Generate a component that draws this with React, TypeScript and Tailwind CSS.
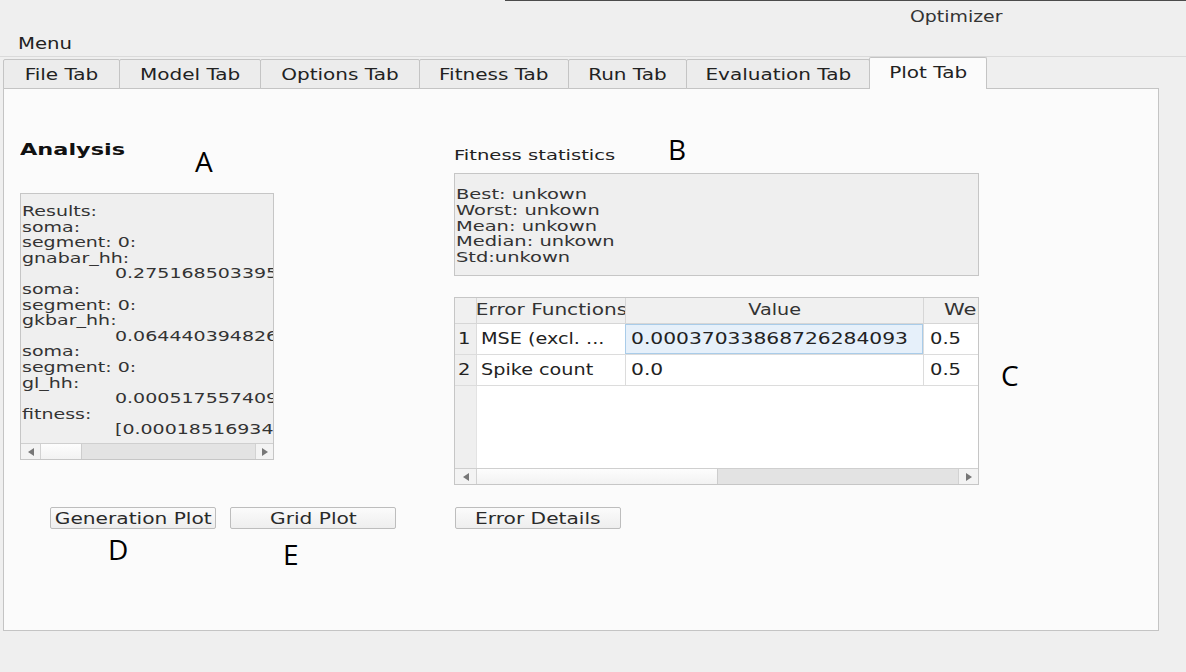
import React from "react";

const font = "font-['DejaVu_Sans','Liberation_Sans',sans-serif]";
const note = "font-['Open_Sans','Liberation_Sans',sans-serif] text-[28px] leading-none text-black";

// the screenshot is stretched sideways, so text spans get a horizontal scale
function W({ children, className = "" }: { children: React.ReactNode; className?: string }) {
  return <span className={`inline-block whitespace-nowrap ${className}`}>{children}</span>;
}

const tabs = [
  { label: "File Tab", w: "w-[117px]" },
  { label: "Model Tab", w: "w-[142px]" },
  { label: "Options Tab", w: "w-[160px]" },
  { label: "Fitness Tab", w: "w-[150px]" },
  { label: "Run Tab", w: "w-[119px]" },
  { label: "Evaluation Tab", w: "w-[184px]" },
];

const results: [string, boolean][] = [
  ["Results:", false],
  ["soma:", false],
  ["segment: 0:", false],
  ["gnabar_hh:", false],
  ["0.2751685033951", true],
  ["soma:", false],
  ["segment: 0:", false],
  ["gkbar_hh:", false],
  ["0.0644403948261", true],
  ["soma:", false],
  ["segment: 0:", false],
  ["gl_hh:", false],
  ["0.0005175574091", true],
  ["fitness:", false],
  ["[0.0001851693451]", true],
];

const stats = ["Best: unkown", "Worst: unkown", "Mean: unkown", "Median: unkown", "Std:unkown"];

function Arrow({ dir }: { dir: "left" | "right" }) {
  return (
    <svg width="6" height="8" viewBox="0 0 6 8">
      {dir === "left" ? (
        <polygon points="6,0 6,8 0,4" fill="#777" />
      ) : (
        <polygon points="0,0 0,8 6,4" fill="#777" />
      )}
    </svg>
  );
}

function ScrollBar({ left, thumb, right }: { left: string; thumb: string; right: string }) {
  return (
    <div className="h-[16px] flex border-t border-[#cfcfcf] bg-[#e3e3e3] shrink-0">
      <div className={`${left} flex items-center justify-center bg-[#f3f3f3] border-r border-[#d2d2d2]`}>
        <Arrow dir="left" />
      </div>
      <div className={`${thumb} bg-gradient-to-b from-[#fdfdfd] to-[#f2f2f2] border-r border-[#cdcdcd]`} />
      <div className="flex-1" />
      <div className={`${right} flex items-center justify-center bg-[#f3f3f3] border-l border-[#d2d2d2]`}>
        <Arrow dir="right" />
      </div>
    </div>
  );
}

function Button({ label, className = "" }: { label: string; className?: string }) {
  return (
    <button
      className={`w-[166px] h-[22px] flex items-center justify-center rounded-[2px] border border-[#bdbdbd] bg-gradient-to-b from-[#fbfbfb] to-[#eeeeee] text-[16px] text-[#2a2a2a] ${className}`}
    >
      <W className="scale-x-[1.26] translate-y-[1px]">{label}</W>
    </button>
  );
}

export default function App() {
  return (
    <div className={`w-[1186px] h-[672px] bg-[#efefef] overflow-hidden text-[#222] ${font}`}>
      <div className="h-px ml-[505px] bg-[#4b4b4b]" />
      <div className="h-[31px] pl-[910px] pt-[6px] text-[16px] leading-[20px] text-[#333]">
        <W className="origin-left scale-x-[1.18]">Optimizer</W>
      </div>
      <div className="h-[25px] border-b border-[#dadada] pl-[18px] text-[16px] leading-[24px]">
        <W className="origin-left scale-x-[1.23]">Menu</W>
      </div>

      {/* tab bar */}
      <div className="relative z-10 h-[32px] -mb-px flex items-end pl-[3px]">
        {tabs.map((t, i) => (
          <div
            key={t.label}
            className={`${t.w} h-[30px] ${i > 0 ? "-ml-px" : ""} flex items-center justify-center border border-[#c4c4c4] bg-[#ececec] rounded-t-[2px] text-[16px] pt-[1px]`}
          >
            <W className="scale-x-[1.25]">{t.label}</W>
          </div>
        ))}
        <div className="w-[118px] h-[32px] -ml-px flex items-center justify-center border border-b-0 border-[#c4c4c4] bg-[#fbfbfb] rounded-t-[2px] text-[16px] pb-[1px]">
          <W className="scale-x-[1.25]">Plot Tab</W>
        </div>
      </div>

      {/* panel */}
      <div className="ml-[3px] w-[1156px] h-[543px] border border-[#c4c4c4] bg-[#fbfbfb] pl-[16px] pt-[48px]">
        <div className="flex items-start">
          {/* left column */}
          <div className="w-[254px] shrink-0">
            <div className="h-[56px] flex items-start">
              <span className="w-[175px] shrink-0 mt-[3px] text-[16px] leading-[20px] font-bold text-[#111]">
                <W className="origin-left scale-x-[1.4]">Analysis</W>
              </span>
              <span className={`${note} mt-[10px]`}>A</span>
            </div>
            <div className="h-[267px] border border-[#c6c6c6] bg-[#efefef] flex flex-col">
              <div className="flex-1 overflow-hidden pt-[10px] pl-px text-[14.5px] leading-[15.6px] text-[#333]">
                {results.map(([txt, indent], i) => (
                  <div key={i} className={indent ? "pl-[93px]" : ""}>
                    <W className="origin-left scale-x-[1.31]">{txt}</W>
                  </div>
                ))}
              </div>
              <ScrollBar left="w-[20px]" thumb="w-[41px]" right="w-[18px]" />
            </div>
          </div>

          {/* right column */}
          <div className="ml-[180px] w-[525px] shrink-0">
            <div className="h-[36px] flex items-start">
              <span className="w-[214px] shrink-0 mt-[9px] text-[14.5px] leading-[18px] text-[#222]">
                <W className="origin-left scale-x-[1.35]">Fitness statistics</W>
              </span>
              <span className={`${note} -mt-[2px]`}>B</span>
            </div>
            <div className="h-[103px] border border-[#c6c6c6] bg-[#efefef] pt-[13px] pl-px text-[14.5px] leading-[15.75px] text-[#333]">
              {stats.map((s) => (
                <div key={s}>
                  <W className="origin-left scale-x-[1.34]">{s}</W>
                </div>
              ))}
            </div>

            {/* error table */}
            <div className="mt-[21px] h-[188px] border border-[#c6c6c6] bg-white flex flex-col overflow-hidden">
              <div className="h-[26px] shrink-0 flex bg-[#f0f0f0] border-b border-[#d6d6d6] text-[15px] text-[#333]">
                <div className="w-[21px] shrink-0" />
                <div className="w-[149px] shrink-0 border-l border-[#d6d6d6] flex items-center justify-center overflow-hidden">
                  <W className="shrink-0 scale-x-[1.34]">Error Functions</W>
                </div>
                <div className="w-[298px] shrink-0 border-l border-[#d6d6d6] flex items-center justify-center">
                  <W className="scale-x-[1.28]">Value</W>
                </div>
                <div className="flex-1 border-l border-[#d6d6d6] flex items-center pl-[20px] overflow-hidden">
                  <W className="origin-left scale-x-[1.4]">Weight</W>
                </div>
              </div>
              {[
                ["1", "MSE (excl. ...", "0.00037033868726284093", "0.5"],
                ["2", "Spike count", "0.0", "0.5"],
              ].map((r, i) => (
                <div key={r[0]} className="h-[31px] shrink-0 flex border-b border-[#dcdcdc] text-[15px] text-[#222]">
                  <div className="w-[21px] shrink-0 bg-[#efefef] flex items-center pl-[3px]">
                    <W className="origin-left scale-x-[1.3]">{r[0]}</W>
                  </div>
                  <div className="w-[149px] shrink-0 border-l border-[#dcdcdc] flex items-center pl-[4px] overflow-hidden">
                    <W className="origin-left scale-x-[1.28]">{r[1]}</W>
                  </div>
                  <div
                    className={`w-[298px] shrink-0 flex items-center pl-[5px] overflow-hidden ${
                      i === 0 ? "border border-[#a9cce9] bg-[#e6f0fa]" : "border-l border-[#dcdcdc]"
                    }`}
                  >
                    <W className="origin-left scale-x-[1.35]">{r[2]}</W>
                  </div>
                  <div className="flex-1 border-l border-[#dcdcdc] flex items-center pl-[6px]">
                    <W className="origin-left scale-x-[1.3]">{r[3]}</W>
                  </div>
                </div>
              ))}
              <div className="flex-1 flex">
                <div className="w-[21px] bg-[#efefef]" />
                <div className="flex-1 border-l border-[#e3e3e3]" />
              </div>
              <ScrollBar left="w-[22px]" thumb="w-[241px]" right="w-[20px]" />
            </div>
          </div>

          <span className={`${note} ml-[22px] mt-[224px]`}>C</span>
        </div>

        {/* buttons */}
        <div className="mt-[22px] flex">
          <Button label="Generation Plot" className="ml-[30px]" />
          <Button label="Grid Plot" className="ml-[14px]" />
          <Button label="Error Details" className="ml-[59px]" />
        </div>
        <div className="flex items-start">
          <span className={`${note} ml-[88px] mt-[6px] w-[175px]`}>D</span>
          <span className={`${note} mt-[11px]`}>E</span>
        </div>
      </div>
    </div>
  );
}
